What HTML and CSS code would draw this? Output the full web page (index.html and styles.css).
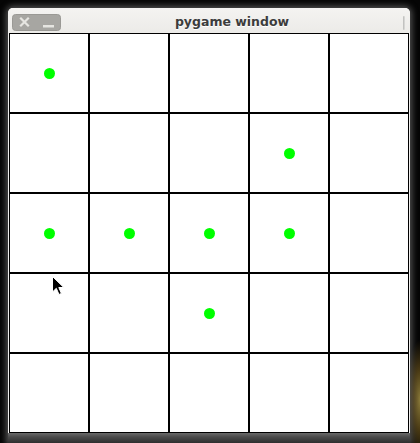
FILE: index.html
```html
<!DOCTYPE html>
<html>
<head>
<meta charset="utf-8">
<link rel="stylesheet" href="styles.css">
</head>
<body>
<div class="window">
  <div class="titlebar">
    <div class="buttons">
      <svg width="49" height="17" viewBox="0 0 49 17">
        <rect x="0.5" y="0.5" width="48" height="16" rx="3" ry="3" fill="#a7a6a2" stroke="#9a9995"/>
        <path d="M9 4.5 L16 11.5 M16 4.5 L9 11.5" stroke="#e6e5e1" stroke-width="2.2" stroke-linecap="square"/>
        <rect x="31" y="11" width="11" height="2.5" fill="#e6e5e1"/>
      </svg>
    </div>
    <div class="title">pygame window</div>
    <div class="grip"></div>
  </div>
  <div class="canvas">
    <div class="grid">
      <div class="cell"><span class="dot"></span></div>
      <div class="cell"></div>
      <div class="cell"></div>
      <div class="cell"></div>
      <div class="cell"></div>

      <div class="cell"></div>
      <div class="cell"></div>
      <div class="cell"></div>
      <div class="cell"><span class="dot"></span></div>
      <div class="cell"></div>

      <div class="cell"><span class="dot"></span></div>
      <div class="cell"><span class="dot"></span></div>
      <div class="cell"><span class="dot"></span></div>
      <div class="cell"><span class="dot"></span></div>
      <div class="cell"></div>

      <div class="cell"></div>
      <div class="cell"></div>
      <div class="cell"><span class="dot"></span></div>
      <div class="cell"></div>
      <div class="cell"></div>

      <div class="cell"></div>
      <div class="cell"></div>
      <div class="cell"></div>
      <div class="cell"></div>
      <div class="cell"></div>
    </div>
    <svg class="cursor" width="13" height="20" viewBox="0 0 13 20">
      <path d="M0.5 0.5 L0.5 16 L4.3 12.3 L7 18.5 L9.4 17.4 L6.8 11.5 L11.8 11.5 Z" fill="#000" stroke="#fff" stroke-width="1"/>
    </svg>
  </div>
  <div class="bottom"></div>
</div>
</body>
</html>
```

FILE: styles.css
```css
html, body {
  margin: 0;
  padding: 0;
}
body {
  width: 420px;
  height: 443px;
  overflow: hidden;
  background:
    radial-gradient(ellipse 14px 60px at 420px 400px, #8a7a3a 0%, #4a3a14 50%, rgba(0,0,0,0) 100%),
    #050505;
  font-family: "DejaVu Sans", sans-serif;
}
.window {
  margin: 8px 10px 0 8px;
  width: 402px;
  height: 435px;
  background: #f0efed;
  border-radius: 5px 5px 0 0;
  box-shadow: 0 0 6px 2px rgba(110,110,110,0.75);
  display: flex;
  flex-direction: column;
}
.titlebar {
  height: 25px;
  display: flex;
  align-items: center;
  background: linear-gradient(#f4f3f1, #ecebe8);
  border-radius: 5px 5px 0 0;
  position: relative;
}
.buttons {
  margin-left: 4px;
  margin-top: 3px;
  display: flex;
}
.title {
  flex: 1;
  text-align: center;
  font-weight: bold;
  font-size: 12.5px;
  color: #3c3c3c;
  margin-top: 2px;
  text-shadow: 0 1px 0 #ffffff;
}
.grip {
  width: 2px;
  height: 14px;
  background: linear-gradient(90deg, #b8b8b6, #e0e0de);
  margin-right: 5px;
  margin-top: 4px;
  border-radius: 1px;
}
.canvas {
  position: relative;
  margin-left: 1px;
  width: 400px;
  height: 400px;
  background: #fff;
}
.grid {
  display: grid;
  grid-template-columns: repeat(5, 80px);
  grid-template-rows: repeat(5, 80px);
}
.cell {
  box-sizing: border-box;
  border: 1px solid #000;
  display: flex;
  align-items: center;
  justify-content: center;
}
.dot {
  width: 11px;
  height: 11px;
  border-radius: 50%;
  background: #00ff00;
}
.cursor {
  position: absolute;
  left: 43px;
  top: 243px;
}
.bottom {
  height: 10px;
  background: linear-gradient(#6a6a6a, #4a4a4a 40%, #2e2e2e);
}
```
